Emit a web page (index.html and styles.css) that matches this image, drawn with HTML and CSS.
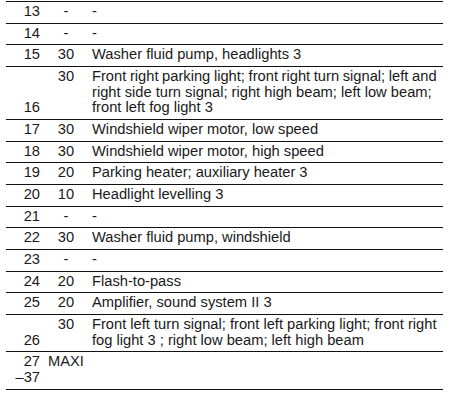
FILE: index.html
```html
<!DOCTYPE html>
<html>
<head>
<meta charset="utf-8">
<link rel="stylesheet" href="styles.css">
</head>
<body>
<table class="fuses">
<colgroup><col class="c-num"><col class="c-amp"><col class="c-desc"></colgroup>
<tbody>
<tr><td class="num">13</td><td class="amp">-</td><td class="desc">-</td></tr>
<tr><td class="num">14</td><td class="amp">-</td><td class="desc">-</td></tr>
<tr><td class="num">15</td><td class="amp">30</td><td class="desc">Washer fluid pump, headlights 3</td></tr>
<tr><td class="num">16</td><td class="amp">30</td><td class="desc"><span class="tight">Front right parking light; front right turn signal; left and</span> right side turn signal; right high beam; left low beam; front left fog light 3</td></tr>
<tr><td class="num">17</td><td class="amp">30</td><td class="desc">Windshield wiper motor, low speed</td></tr>
<tr><td class="num">18</td><td class="amp">30</td><td class="desc">Windshield wiper motor, high speed</td></tr>
<tr><td class="num">19</td><td class="amp">20</td><td class="desc">Parking heater; auxiliary heater 3</td></tr>
<tr><td class="num">20</td><td class="amp">10</td><td class="desc">Headlight levelling 3</td></tr>
<tr><td class="num">21</td><td class="amp">-</td><td class="desc">-</td></tr>
<tr><td class="num">22</td><td class="amp">30</td><td class="desc">Washer fluid pump, windshield</td></tr>
<tr><td class="num">23</td><td class="amp">-</td><td class="desc">-</td></tr>
<tr><td class="num">24</td><td class="amp">20</td><td class="desc">Flash-to-pass</td></tr>
<tr><td class="num">25</td><td class="amp">20</td><td class="desc">Amplifier, sound system II 3</td></tr>
<tr><td class="num">26</td><td class="amp">30</td><td class="desc">Front left turn signal; front left parking light; front right fog light 3 ; right low beam; left high beam</td></tr>
<tr><td class="num">27<br>–37</td><td class="amp">MAXI</td><td class="desc"></td></tr>
</tbody>
</table>
</body>
</html>
```
FILE: styles.css
```css
html, body {
  margin: 0;
  padding: 0;
  background: #fff;
}
body {
  font-family: "Liberation Sans", Arial, sans-serif;
  font-size: 14.7px;
  color: #1a1a1a;
}
.fuses {
  border-collapse: collapse;
  margin: 1px 0 0 6px;
  width: 437px;
  table-layout: fixed;
}
.c-num { width: 38px; }
.c-amp { width: 44px; }
.fuses td {
  padding: 2px 4px 2.95px 4px;
  line-height: 15.72px;
  border-bottom: 1px solid #111;
  vertical-align: top;
}
.fuses tr:first-child td {
  border-top: 1px solid #111;
}
.fuses td.num {
  text-align: right;
  vertical-align: bottom;
}
.fuses td.amp {
  text-align: center;
  padding-left: 0;
  padding-right: 0;
}
.fuses td.desc {
  padding-right: 2px;
}
.tight {
  word-spacing: -0.45px;
}
```
